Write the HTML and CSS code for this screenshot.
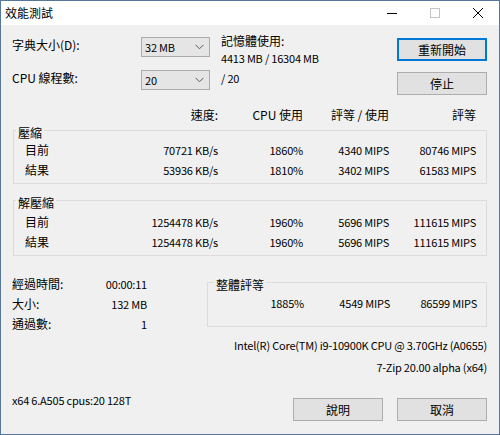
FILE: index.html
```html
<!DOCTYPE html>
<html lang="zh-Hant">
<head>
<meta charset="utf-8">
<title>效能測試</title>
<link rel="stylesheet" href="styles.css">
</head>
<body>
<div class="window">
  <div class="titlebar">
    <span class="title">效能測試</span>
    <div class="caption">
      <span class="cap"><svg width="10" height="10" viewBox="0 0 10 10"><path d="M0 5.5H10" stroke="#000" stroke-width="1"/></svg></span>
      <span class="cap"><svg width="10" height="10" viewBox="0 0 10 10"><rect x="0.5" y="0.5" width="9" height="9" fill="none" stroke="#c4c4c4" stroke-width="1"/></svg></span>
      <span class="cap"><svg width="10" height="10" viewBox="0 0 10 10"><path d="M0 0L10 10M10 0L0 10" stroke="#000" stroke-width="1"/></svg></span>
    </div>
  </div>
  <div class="content">
    <div class="top">
      <div class="lbl">字典大小(D):</div>
      <div class="combo"><span class="num">32 MB</span><svg width="9" height="6" viewBox="0 0 9 6"><path d="M0.5 0.8L4.5 4.8L8.5 0.8" fill="none" stroke="#5a5a5a" stroke-width="1"/></svg></div>
      <div class="mem"><div class="mem-l">記憶體使用:</div><div class="mem-v num">4413 MB / 16304 MB</div></div>
      <button class="btn btn-default">重新開始</button>
      <div class="lbl">CPU 線程數:</div>
      <div class="combo"><span class="num">20</span><svg width="9" height="6" viewBox="0 0 9 6"><path d="M0.5 0.8L4.5 4.8L8.5 0.8" fill="none" stroke="#5a5a5a" stroke-width="1"/></svg></div>
      <div class="threads num">/ 20</div>
      <button class="btn btn-r2">停止</button>
    </div>

    <div class="cols hdr">
      <span></span><span>速度:</span><span>CPU 使用</span><span>評等 / 使用</span><span>評等</span>
    </div>

    <fieldset class="grp">
      <legend>壓縮</legend>
      <div class="grp-body">
        <div class="cols row"><span class="l">目前</span><span>70721 KB/s</span><span>1860%</span><span>4340 MIPS</span><span>80746 MIPS</span></div>
        <div class="cols row"><span class="l">結果</span><span>53936 KB/s</span><span>1810%</span><span>3402 MIPS</span><span>61583 MIPS</span></div>
      </div>
    </fieldset>

    <fieldset class="grp grp2">
      <legend>解壓縮</legend>
      <div class="grp-body">
        <div class="cols row"><span class="l">目前</span><span>1254478 KB/s</span><span>1960%</span><span>5696 MIPS</span><span>111615 MIPS</span></div>
        <div class="cols row"><span class="l">結果</span><span>1254478 KB/s</span><span>1960%</span><span>5696 MIPS</span><span>111615 MIPS</span></div>
      </div>
    </fieldset>

    <div class="lower">
      <div class="stats">
        <div class="stat"><span>經過時間:</span><span class="num">00:00:11</span></div>
        <div class="stat"><span>大小:</span><span class="num">132 MB</span></div>
        <div class="stat"><span>通過數:</span><span class="num">1</span></div>
      </div>
      <div class="right">
        <fieldset class="grp total">
          <legend>整體評等</legend>
          <div class="total-body num">
            <span></span><span>1885%</span><span>4549 MIPS</span><span>86599 MIPS</span>
          </div>
        </fieldset>
        <div class="cpu num"><span>Intel(R) Core(TM) i9-10900K CPU @ 3.70GHz (A0655)</span></div>
        <div class="ver num"><span>7-Zip 20.00 alpha (x64)</span></div>
      </div>
    </div>

    <div class="footer">
      <div class="info num">x64 6.A505 cpus:20 128T</div>
      <div class="btns">
        <button class="btn">說明</button>
        <button class="btn">取消</button>
      </div>
    </div>
  </div>
</div>
</body>
</html>
```
FILE: styles.css
```css
* { box-sizing: border-box; }
html, body { margin: 0; padding: 0; }
body {
  width: 500px;
  height: 435px;
  background: #ffffff;
  font-family: "Noto Sans CJK TC", "Noto Sans", sans-serif;
  font-size: 12px;
  color: #000000;
}
.num, .row span:not(.l) {
  font-size: 11px;
  letter-spacing: -0.2px;
}
.window {
  width: 500px;
  height: 435px;
  border: 1px solid #56779a;
  background: #f0f0f0;
  display: flex;
  flex-direction: column;
}
.titlebar {
  height: 24px;
  flex: none;
  background: #ffffff;
  display: flex;
  align-items: center;
  justify-content: space-between;
}
.title { padding-left: 4px; line-height: 14px; }
.caption { display: flex; height: 100%; }
.cap {
  width: 43px;
  height: 24px;
  display: flex;
  align-items: center;
  justify-content: center;
}
.cap svg { display: block; }

.content {
  flex: 1;
  padding: 12px 12px 0 11px;
  display: flex;
  flex-direction: column;
}

.top {
  display: grid;
  grid-template-columns: 129px 69px 187px 90px;
  grid-template-rows: 24px 26px;
  row-gap: 9px;
}
.lbl { line-height: 16px; }
.combo {
  height: 20px;
  border: 1px solid #acacac;
  background: #e5e5e5;
  display: flex;
  align-items: center;
  justify-content: space-between;
  padding: 0 5px 0 3px;
  line-height: 14px;
}
.combo svg { display: block; }
.mem { margin-top: -4px; padding-left: 11px; }
.mem-l { line-height: 16px; }
.mem-v { line-height: 18px; }
.threads { padding-left: 11px; line-height: 16px; }

.btn {
  width: 90px;
  height: 23px;
  margin: 0;
  padding: 0;
  background: #e1e1e1;
  border: 1px solid #adadad;
  font-family: inherit;
  font-size: 12px;
  color: #000;
  line-height: 14px;
}
.top .btn { margin-top: 1px; }
.top .btn-r2 { margin-top: 2px; }
.btn-default {
  border-color: #0078d7;
  box-shadow: inset 0 0 0 1px #0078d7;
}

.cols {
  display: grid;
  grid-template-columns: 1fr 100px 85px 86px 87px;
  text-align: right;
}
.cols .l { text-align: left; }
.hdr {
  margin-top: 13px;
  line-height: 12px;
  padding: 0 11px 0 13px;
}

.grp {
  margin: 0 0 0 1px;
  padding: 0;
  border: 1px solid #dcdcdc;
  min-width: 0;
}
.grp legend {
  margin-left: 2px;
  padding: 5px 2px 0;
  line-height: 14px;
}
.grp-body { padding: 0 10px 3px 11px; }
.grp2 { margin-top: 7px; }
.grp2 .grp-body { padding-top: 2px; }
.row { line-height: 20px; }

.lower {
  display: grid;
  grid-template-columns: 135px 1fr;
  column-gap: 60px;
  margin-top: 17px;
  align-items: start;
}
.stats { padding-top: 1px; }
.stat {
  display: flex;
  justify-content: space-between;
  align-items: baseline;
  line-height: 20px;
}
.right { min-width: 0; }
.total { margin: 0; }
.total legend { margin-left: 6px; }
.total-body {
  display: grid;
  grid-template-columns: 1fr 85px 86px 87px;
  text-align: right;
  line-height: 20px;
  padding: 1px 10px 13px 11px;
}
.cpu, .ver {
  display: flex;
  justify-content: flex-end;
  white-space: nowrap;
  line-height: 14px;
}
.cpu { margin-top: 11px; }
.ver { margin-top: 8px; }
.cpu span, .ver span { flex: none; }

.footer {
  display: flex;
  align-items: flex-start;
  margin-top: 19px;
}
.info { flex: 1; line-height: 14px; }
.btns { display: flex; gap: 14px; margin-top: 5px; }
```
